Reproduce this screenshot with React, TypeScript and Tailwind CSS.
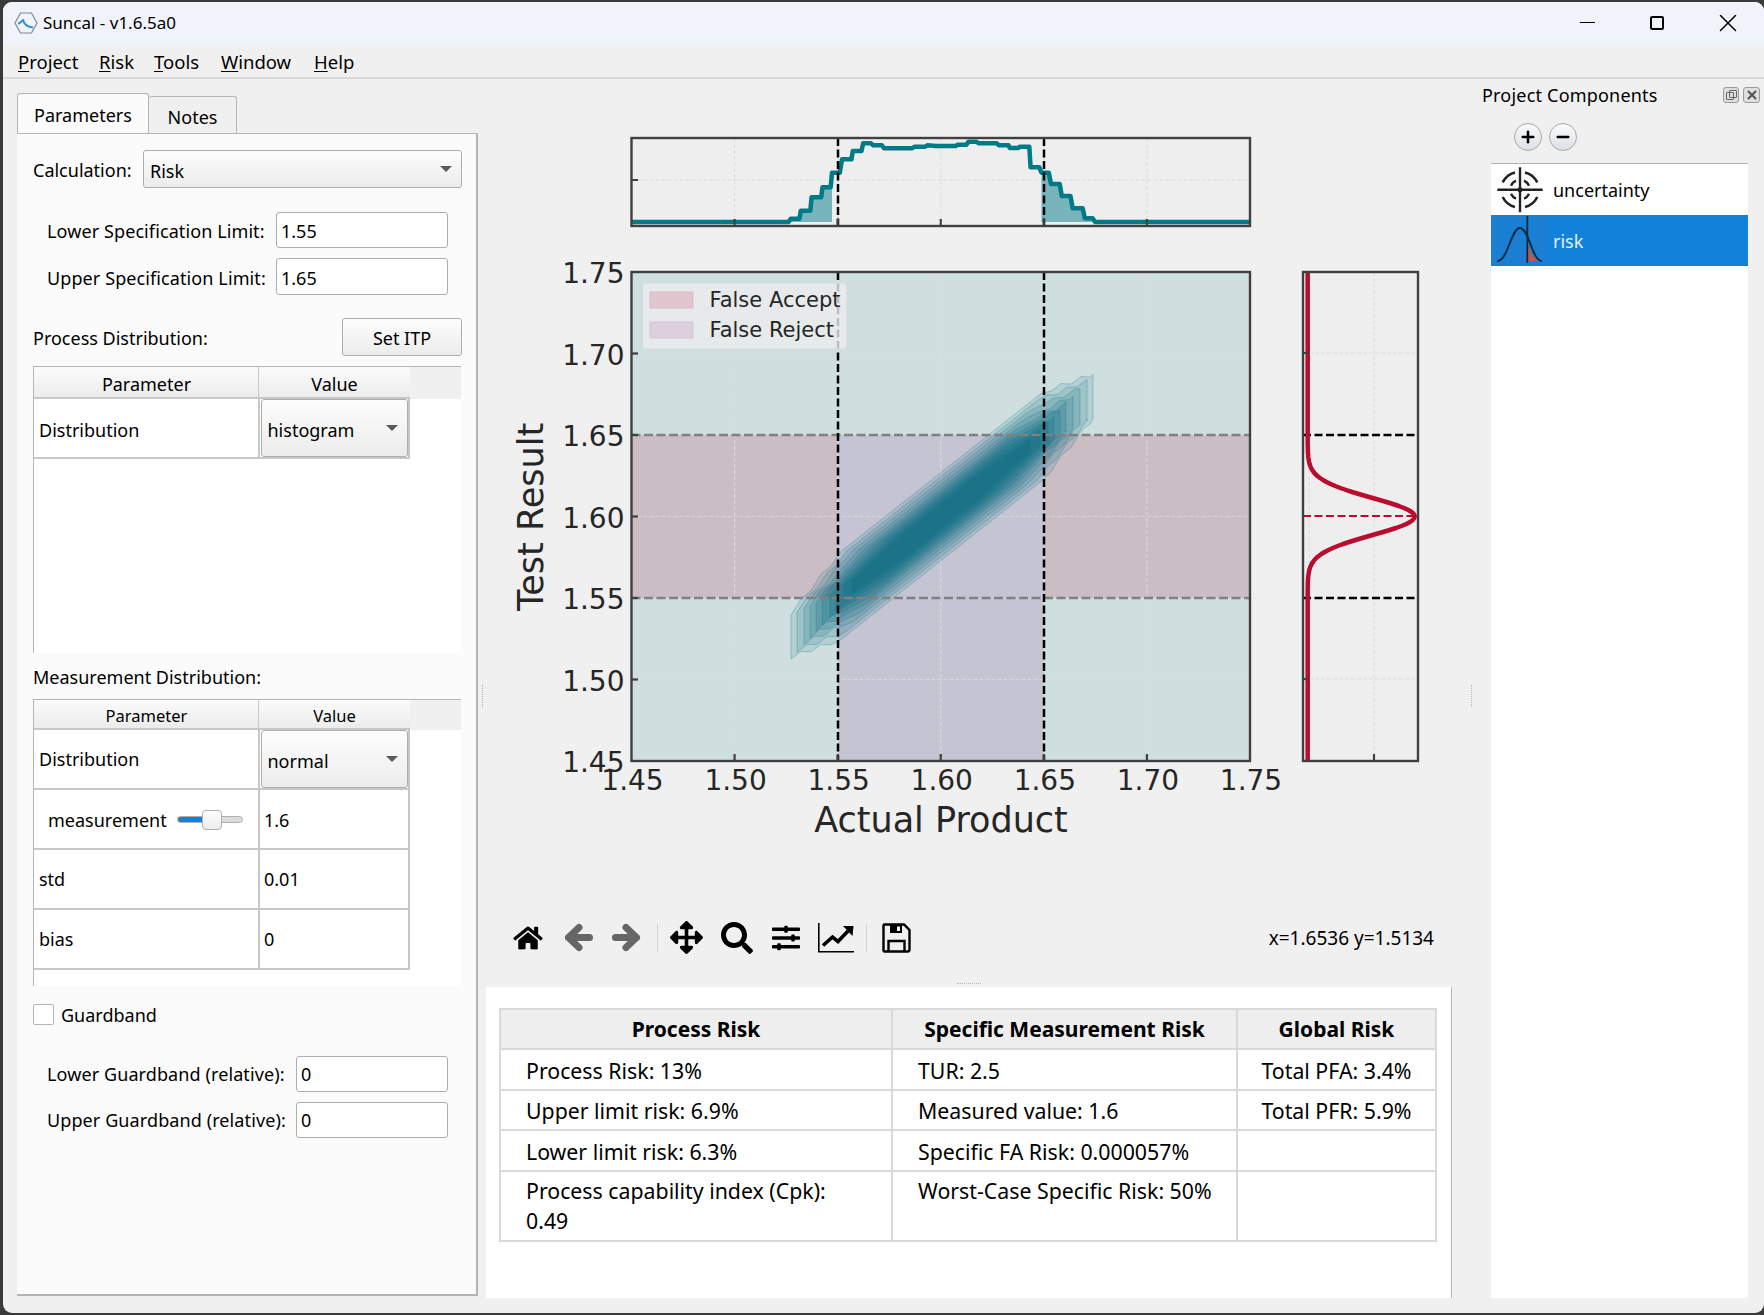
import type { ReactNode } from "react";
import { FaArrowsAlt, FaHome, FaSearch, FaSlidersH } from "react-icons/fa";
import { Minus, Plus, X } from "lucide-react";

const UI_FONT = "font-['Noto_Sans','Open_Sans',sans-serif]";
const PLOT_FONT = "'DejaVu Sans', sans-serif";

// plot pixel positions of data values
const xPos = (v: number) => 631.5 + ((v - 1.45) / 0.3) * 618.5;
const yPos = (v: number) => 272 + ((1.75 - v) / 0.3) * 489;
const TICKS = [1.5, 1.55, 1.6, 1.65, 1.7];
const ALL_TICKS = ["1.45", "1.50", "1.55", "1.60", "1.65", "1.70", "1.75"];

// histogram outline read from the top plot
const HIST: [number, number][] = [
  [73, 306], [435, 306], [440, 296], [460, 296], [463, 272], [485, 272], [488, 232], [510, 232],
  [513, 202], [532, 202], [535, 158], [553, 158], [558, 118], [580, 118], [583, 93], [603, 93],
  [607, 70], [625, 70], [630, 76], [650, 76], [655, 85], [720, 85], [725, 80], [750, 80],
  [755, 76], [775, 78], [820, 78], [825, 74], [845, 74], [850, 65], [868, 65], [873, 70],
  [915, 70], [920, 76], [942, 76], [945, 84], [965, 84], [968, 80], [990, 80], [993, 142],
  [1013, 142], [1018, 158], [1035, 158], [1040, 192], [1060, 192], [1065, 228], [1085, 228],
  [1090, 265], [1113, 265], [1118, 295], [1136, 295], [1142, 306], [1500, 306],
];
const histPts = HIST.map(([x, y]) => `${(600 + x / 2.306).toFixed(1)},${(120 + y / 3).toFixed(1)}`).join(" ");
const histFill = (a: number, b: number) => {
  const inside = HIST.filter(([x]) => x >= a && x <= b);
  const pts = inside.map(([x, y]) => [600 + x / 2.306, 120 + y / 3]);
  const first = pts[0];
  const last = pts[pts.length - 1];
  return `M${first[0]},222 ` + pts.map((p) => `L${p[0]},${p[1]}`).join(" ") + ` L${last[0]},222 Z`;
};

// [half height, left end, right end, fill alpha] of each contour level
const LEVELS: [number, number, number, number][] = [
  [44, 791, 1093, 0.13],
  [40, 797, 1087, 0.13],
  [36, 804, 1080, 0.14],
  [32, 810, 1073, 0.16],
  [28, 816, 1066, 0.18],
  [25, 822, 1060, 0.2],
  [22, 830, 1054, 0.22],
  [19, 836, 1048, 0.25],
  [16, 844, 1040, 0.28],
  [13, 852, 1030, 0.3],
];

function contour(h: number, x0: number, x1: number) {
  const line = (x: number) => 516.5 - (x - 941) * 0.79;
  const half = (x: number) => {
    const t = Math.min(1, (x - x0) / 50, (x1 - x) / 50);
    return h * (0.5 + 0.5 * t);
  };
  // the tails outside the spec limits are visibly stepped
  const jag = (x: number, i: number) => (x < 838 || x > 1044 ? (i % 2 === 0 ? 2 : -2) : 0);
  const upper: string[] = [];
  const lower: string[] = [];
  let i = 0;
  for (let x = x0; x <= x1; x += 10) {
    upper.push(`${x},${(line(x) - half(x) + jag(x, i)).toFixed(1)}`);
    lower.unshift(`${x},${(line(x) + half(x) + jag(x, i)).toFixed(1)}`);
    i++;
  }
  upper.push(`${x1},${(line(x1) - half(x1)).toFixed(1)}`);
  lower.unshift(`${x1},${(line(x1) + half(x1)).toFixed(1)}`);
  return [...upper, ...lower].join(" ");
}

const gaussPts = (() => {
  const pts: string[] = [];
  for (let y = 272; y <= 761; y += 2) {
    const v = Math.exp(-((y - 516.5) ** 2) / (2 * 18.5 * 18.5));
    pts.push(`${(1307.7 + v * 107).toFixed(1)},${y}`);
  }
  return pts.join(" ");
})();

function Plots() {
  const grid = { stroke: "#dedede", strokeWidth: 1.2, strokeDasharray: "4 2" };
  const frame = { fill: "none", stroke: "#404040", strokeWidth: 2.4 };
  const tick = { stroke: "#404040", strokeWidth: 2.2 };
  return (
    <svg width={966} height={826} viewBox="486 79 966 826" className="block" fontFamily={PLOT_FONT}>
      {/* top marginal */}
      <rect x={631.5} y={138} width={618.5} height={88} fill="#eeeeee" />
      {TICKS.map((t) => (
        <line key={t} x1={xPos(t)} x2={xPos(t)} y1={138} y2={226} {...grid} />
      ))}
      <line x1={631.5} x2={1250} y1={180} y2={180} {...grid} />
      <path d={histFill(435, 535)} fill="#007a87" fillOpacity={0.5} />
      <path d={histFill(1018, 1142)} fill="#007a87" fillOpacity={0.5} />
      <polyline points={histPts} fill="none" stroke="#007a87" strokeWidth={4.5} strokeLinejoin="round" />
      <line x1={838} x2={838} y1={138} y2={226} stroke="#000" strokeWidth={2.5} strokeDasharray="8 3.5" />
      <line x1={1044} x2={1044} y1={138} y2={226} stroke="#000" strokeWidth={2.5} strokeDasharray="8 3.5" />
      {TICKS.map((t) => (
        <line key={t} x1={xPos(t)} x2={xPos(t)} y1={226} y2={219} {...tick} />
      ))}
      <line x1={631.5} x2={638} y1={180} y2={180} {...tick} />
      <rect x={631.5} y={138} width={618.5} height={88} {...frame} />

      {/* main plot */}
      <rect x={631.5} y={272} width={618.5} height={489} fill="#cfdfdf" />
      <rect x={631.5} y={435} width={618.5} height={163} fill="#cbbdc4" />
      <rect x={838} y={435} width={206} height={326} fill="#c4c4d2" />
      {TICKS.map((t) => (
        <g key={t}>
          <line x1={xPos(t)} x2={xPos(t)} y1={272} y2={761} {...grid} strokeOpacity={0.75} />
          <line x1={631.5} x2={1250} y1={yPos(t)} y2={yPos(t)} {...grid} strokeOpacity={0.75} />
        </g>
      ))}
      {LEVELS.map(([h, a, b, alpha]) => (
        <polygon key={h} points={contour(h, a, b)} fill="#0b6a80" fillOpacity={alpha} stroke="#0b7a8a" strokeOpacity={0.3} strokeWidth={1} />
      ))}
      <line x1={631.5} x2={1250} y1={435} y2={435} stroke="#808080" strokeWidth={2.5} strokeDasharray="9 3.5" />
      <line x1={631.5} x2={1250} y1={598} y2={598} stroke="#808080" strokeWidth={2.5} strokeDasharray="9 3.5" />
      <line x1={838} x2={838} y1={272} y2={761} stroke="#000" strokeWidth={2.5} strokeDasharray="8 3.5" />
      <line x1={1044} x2={1044} y1={272} y2={761} stroke="#000" strokeWidth={2.5} strokeDasharray="8 3.5" />
      {TICKS.map((t) => (
        <g key={t}>
          <line x1={xPos(t)} x2={xPos(t)} y1={761} y2={754} {...tick} />
          <line x1={631.5} x2={638} y1={yPos(t)} y2={yPos(t)} {...tick} />
        </g>
      ))}
      <rect x={631.5} y={272} width={618.5} height={489} {...frame} />

      {/* legend */}
      <rect x={642.5} y={283} width={204.5} height={66} rx={3} fill="#ececec" fillOpacity={0.8} stroke="#d4d8d8" />
      <rect x={650} y={292} width={43} height={16} fill="#e0c7cf" stroke="#d8bcc6" />
      <rect x={650} y={322} width={43} height={16} fill="#dccfde" stroke="#d2c4d6" />
      <text x={709.5} y={306.5} fontSize={21} fill="#262626">False Accept</text>
      <text x={709.5} y={336.5} fontSize={21} fill="#262626">False Reject</text>

      {/* axis labels */}
      {ALL_TICKS.map((t) => (
        <text key={t} x={xPos(Number(t)) + 1} y={790} fontSize={28} fill="#262626" textAnchor="middle">{t}</text>
      ))}
      {ALL_TICKS.map((t) => (
        <text key={t} x={624.5} y={yPos(Number(t)) + 11} fontSize={28} fill="#262626" textAnchor="end">{t}</text>
      ))}
      <text x={941} y={832} fontSize={35} fill="#262626" textAnchor="middle">Actual Product</text>
      <text x={0} y={0} fontSize={35} fill="#262626" textAnchor="middle" transform="translate(543 517) rotate(-90)">Test Result</text>

      {/* right marginal */}
      <rect x={1303} y={272} width={115} height={489} fill="#eeeeee" />
      <line x1={1374} x2={1374} y1={272} y2={761} {...grid} />
      <line x1={1309} x2={1309} y1={272} y2={761} {...grid} />
      <line x1={1303} x2={1418} y1={353} y2={353} {...grid} />
      <line x1={1303} x2={1418} y1={679} y2={679} {...grid} />
      <line x1={1303} x2={1418} y1={435} y2={435} stroke="#000" strokeWidth={2.5} strokeDasharray="8 3.5" />
      <line x1={1303} x2={1418} y1={598} y2={598} stroke="#000" strokeWidth={2.5} strokeDasharray="8 3.5" />
      <polyline points={gaussPts} fill="none" stroke="#ba0c2f" strokeWidth={4.5} strokeLinejoin="round" />
      <line x1={1303} x2={1418} y1={516} y2={516} stroke="#ba0c2f" strokeWidth={2} strokeDasharray="8 3.5" />
      <line x1={1374} x2={1374} y1={761} y2={754} {...tick} />
      <line x1={1303} x2={1309} y1={353} y2={353} {...tick} />
      <line x1={1303} x2={1309} y1={679} y2={679} {...tick} />
      <rect x={1303} y={272} width={115} height={489} {...frame} />
    </svg>
  );
}

function Caret() {
  return <span className="block w-0 h-0 border-l-[6px] border-r-[6px] border-t-[6px] border-l-transparent border-r-transparent border-t-[#5a5a5a]" />;
}

function Select({ value, className }: { value: string; className: string }) {
  return (
    <div className={`flex items-center justify-between rounded-[3px] border border-[#adadad] bg-gradient-to-b from-[#fdfdfd] to-[#ececec] pl-[6px] pr-[9px] ${className}`}>
      <span className="pt-[4px]">{value}</span>
      <Caret />
    </div>
  );
}

function Field({ label, value, labelW, inputW, mt, h, textPt = "pt-[2px]" }: { label: string; value: string; labelW: string; inputW: string; mt: string; h: string; textPt?: string }) {
  return (
    <div className={`flex items-center pl-[14px] ${mt} ${h}`}>
      <span className={`${labelW} whitespace-nowrap tracking-[0.1px] ${textPt}`}>{label}</span>
      <div className={`${inputW} h-full flex items-center rounded-[3px] border border-[#adadad] bg-white pl-[4px] ${textPt}`}>{value}</div>
    </div>
  );
}

function Row({ left, right, leftClass = "pl-[5px]" }: { left: ReactNode; right: ReactNode; leftClass?: string }) {
  return (
    <div className="flex h-[60px] w-[376px] border-b-2 border-[#c8c8c8]">
      <div className={`w-[224px] flex items-center ${leftClass}`}>{left}</div>
      <div className="w-[152px] flex items-center border-l-2 border-r-2 border-[#c8c8c8]">{right}</div>
    </div>
  );
}

function ParamTable({ small, children }: { small?: boolean; children: ReactNode }) {
  return (
    <div className="h-[287px] w-[428px] bg-white border-l border-t border-[#b4b4b4]">
      <div className={`flex ${small ? "h-[30px] text-[16.5px]" : "h-[32px]"}`}>
        <div className="w-[224px] pt-[4px] pl-[1px] flex items-center justify-center border-b-2 border-[#c8c8c8] bg-gradient-to-b from-[#fbfbfb] to-[#ececec]">Parameter</div>
        <div className="w-[152px] pt-[4px] flex items-center justify-center border-l border-b-2 border-[#c8c8c8] bg-gradient-to-b from-[#fbfbfb] to-[#ececec]">Value</div>
        <div className="flex-1 bg-[#f0f0f0]" />
      </div>
      {children}
    </div>
  );
}

function LeftPanel() {
  return (
    <div className="w-[461px] flex flex-col shrink-0 pt-[14px]">
      <div className="flex items-end h-[40px]">
        <div className="w-[132px] h-[40px] pt-[4px] flex items-center justify-center bg-[#fbfbfb] border border-b-0 border-[#b4b4b4] rounded-t-[3px]">Parameters</div>
        <div className="w-[88px] h-[37px] pt-[4px] flex items-center justify-center bg-[#f0f0f0] border border-l-0 border-b-0 border-[#b4b4b4] rounded-t-[3px]">Notes</div>
      </div>
      <div className="h-[1163px] bg-[#fbfbfb] border-t border-r-2 border-b-2 border-[#b4b4b4] pl-[16px] pt-[16px]">
        <div className="flex items-center h-[38px]">
          <span className="w-[110px] pt-[3px]">Calculation:</span>
          <Select value="Risk" className="w-[319px] h-full" />
        </div>
        <Field label="Lower Specification Limit:" value="1.55" labelW="w-[229px]" inputW="w-[172px]" mt="mt-[24px]" h="h-[36px]" textPt="pt-[3px]" />
        <Field label="Upper Specification Limit:" value="1.65" labelW="w-[229px]" inputW="w-[172px]" mt="mt-[10px]" h="h-[37px]" textPt="pt-[3px]" />
        <div className="flex items-center justify-between w-[429px] h-[38px] mt-[23px]">
          <span className="pt-[2px]">Process Distribution:</span>
          <div className="w-[120px] h-full pt-[2px] flex items-center justify-center rounded-[3px] border border-[#adadad] bg-gradient-to-b from-[#fdfdfd] to-[#ececec]">Set ITP</div>
        </div>
        <div className="mt-[10px]">
          <ParamTable>
            <Row left={<span className="pt-[4px]">Distribution</span>} right={<Select value="histogram" className="w-[147px] h-[58px] mx-auto" />} />
          </ParamTable>
        </div>
        <div className="h-[46px] pt-[3px] flex items-center">Measurement Distribution:</div>
        <ParamTable small>
          <Row left="Distribution" right={<Select value="normal" className="w-[147px] h-[58px] mx-auto" />} />
          <Row
            leftClass="pl-[14px]"
            left={
              <div className="flex items-center">
                <span className="w-[129px] pt-[2px]">measurement</span>
                <div className="relative w-[66px] h-[7px] rounded-full border border-[#b0b0b0] bg-[#dcdcdc]">
                  <div className="w-[26px] h-full rounded-l-full bg-[#1281d9]" />
                  <div className="absolute left-[24px] top-[-7px] w-[20px] h-[20px] rounded-[4px] border border-[#b0b0b0] bg-gradient-to-b from-[#ffffff] to-[#ececec]" />
                </div>
              </div>
            }
            right={<span className="pl-[4px] pt-[2px]">1.6</span>}
          />
          <Row left="std" leftClass="pl-[5px]" right={<span className="pl-[4px]">0.01</span>} />
          <Row left="bias" leftClass="pl-[5px]" right={<span className="pl-[4px]">0</span>} />
        </ParamTable>
        <div className="flex items-center mt-[18px] h-[21px]">
          <div className="w-[21px] h-[21px] border border-[#b4b4b4] bg-white rounded-[2px]" />
          <span className="ml-[7px] pt-[2px]">Guardband</span>
        </div>
        <Field label="Lower Guardband (relative):" value="0" labelW="w-[249px]" inputW="w-[152px]" mt="mt-[31px]" h="h-[36px]" textPt="pt-[1px]" />
        <Field label="Upper Guardband (relative):" value="0" labelW="w-[249px]" inputW="w-[152px]" mt="mt-[10px]" h="h-[36px]" textPt="pt-[1px]" />
      </div>
    </div>
  );
}

function BackIcon({ flip }: { flip?: boolean }) {
  return (
    <svg width={29} height={29} viewBox="0 0 29 29" fill="none" stroke="#666666" strokeWidth={7} strokeLinecap="round" strokeLinejoin="round" className={`shrink-0 ${flip ? "-scale-x-100" : ""}`}>
      <path d="M15 4.500L4.500 14.500L15 24.500M4.500 14.500H25.500" />
    </svg>
  );
}

function PlotIcon() {
  return (
    <svg width={36} height={30} viewBox="0 0 36 30" fill="none" stroke="#000" className="shrink-0">
      <path d="M0.800 0V28.800H36" strokeWidth={1.600} />
      <path d="M5 22.500L14.500 14L20 18.500L30 8" strokeWidth={3.600} />
      <path d="M25 3L35.500 3L34.500 13Z" fill="#000" stroke="none" />
    </svg>
  );
}

function SaveIcon() {
  return (
    <svg width={29} height={30} viewBox="0 0 29 30" fill="none" className="shrink-0">
      <path d="M2.500 1.500H22L27.500 7V26.500A2 2 0 0 1 25.500 28.500H2.500A1.500 1.500 0 0 1 1.500 26.500V2.500A1 1 0 0 1 2.500 1.500Z" stroke="#000" strokeWidth={2.400} />
      <path d="M8 1.500H20V10H8Z" fill="#000" />
      <path d="M15 3.500H18V8H15Z" fill="#f0f0f0" />
      <path d="M6.500 28V18H22.500V28" stroke="#000" strokeWidth={2.400} />
    </svg>
  );
}

function Toolbar() {
  return (
    <div className="h-[75px] flex items-center pl-[27px] pr-[18px] pb-[10px]">
      <FaHome className="w-[30px] h-[26px] shrink-0 text-black" />
      <div className="ml-[21px]"><BackIcon /></div>
      <div className="ml-[19px]"><BackIcon flip /></div>
      <div className="ml-[16px] w-px h-[28px] bg-[#d4d4d4]" />
      <FaArrowsAlt className="ml-[12px] w-[33px] h-[33px] text-black" />
      <FaSearch className="ml-[18px] w-[32px] h-[32px] text-black" />
      <FaSlidersH className="ml-[18px] w-[30px] h-[28px] text-black" />
      <div className="ml-[17px]"><PlotIcon /></div>
      <div className="ml-[12px] w-px h-[28px] bg-[#d4d4d4]" />
      <div className="ml-[15px]"><SaveIcon /></div>
      <span className="ml-auto text-[19px] pt-[2px]">x=1.6536 y=1.5134</span>
    </div>
  );
}

const RISK_ROWS = [
  { h: "h-[41px]", cells: ["Process Risk: 13%", "TUR: 2.5", "Total PFA: 3.4%"] },
  { h: "h-[40px]", cells: ["Upper limit risk: 6.9%", "Measured value: 1.6", "Total PFR: 5.9%"] },
  { h: "h-[41px]", cells: ["Lower limit risk: 6.3%", "Specific FA Risk: 0.000057%", ""] },
];

function ResultsTable() {
  const th = "border-2 border-[#d9d9d9] bg-[#eeeeee] font-bold text-center align-middle text-[21px] pt-[2px]";
  const td = "border-2 border-[#d9d9d9] pl-[25px] pr-[20px] align-middle leading-[30px] pt-[2px]";
  return (
    <div className="h-[311px] bg-white border-r border-[#b4b4b4] pl-[13px] pt-[21px]">
      <table className="w-[936px] table-fixed border-collapse text-[21.3px]">
        <colgroup>
          <col className="w-[392px]" />
          <col className="w-[345px]" />
          <col className="w-[199px]" />
        </colgroup>
        <thead>
          <tr className="h-[40px]">
            <th className={th}>Process Risk</th>
            <th className={th}>Specific Measurement Risk</th>
            <th className={th}>Global Risk</th>
          </tr>
        </thead>
        <tbody>
          {RISK_ROWS.map((r) => (
            <tr key={r.cells[0]} className={r.h}>
              <td className={td}>{r.cells[0]}</td>
              <td className={td}>{r.cells[1]}</td>
              <td className={`${td} whitespace-nowrap text-center !px-0`}>{r.cells[2]}</td>
            </tr>
          ))}
          <tr className="h-[70px]">
            <td className={`${td} !align-top !pt-[4px]`}>Process capability index (Cpk):<br />0.49</td>
            <td className={`${td} !align-top !pt-[4px] whitespace-nowrap`}>Worst-Case Specific Risk: 50%</td>
            <td className={td} />
          </tr>
        </tbody>
      </table>
    </div>
  );
}

function TargetIcon() {
  return (
    <svg width={57} height={51} viewBox="0 0 57 51" fill="none" stroke="#222" className="shrink-0">
      <path d="M29 3.300V48.300M6.300 25.700H51.700" strokeWidth={2.400} />
      <path d="M11.700 18.400A18.700 18.700 0 0 1 24 8.400M34 8.400A18.700 18.700 0 0 1 46.300 18.400M46.300 33A18.700 18.700 0 0 1 34 43M24 43A18.700 18.700 0 0 1 11.700 33" strokeWidth={2.600} />
      <path d="M20 21.700A10 10 0 0 1 25 16.700M33 16.700A10 10 0 0 1 38 21.700M38 29.700A10 10 0 0 1 33 34.700M25 34.700A10 10 0 0 1 20 29.700" strokeWidth={2.400} />
      <circle cx={29} cy={25.700} r={2.500} fill="#222" stroke="none" />
    </svg>
  );
}

function RiskIcon() {
  return (
    <svg width={57} height={51} viewBox="0 0 57 51" fill="none" className="shrink-0 bg-[#1a7fd2]">
      <path d="M36.300 24C38.500 36 42 46 51 46L36.300 46Z" fill="#b85c44" />
      <path d="M6.300 46C17 46 20 13 29 13C38 13 41 46 51 46" stroke="#10283c" strokeWidth={1.800} />
      <path d="M36.300 1V48" stroke="#10283c" strokeWidth={1.800} />
    </svg>
  );
}

function RoundButton({ children }: { children: ReactNode }) {
  return (
    <div className="w-[28px] h-[28px] rounded-full border border-[#a8a8a8] bg-gradient-to-b from-[#fbfbfb] to-[#dcdfe4] flex items-center justify-center">
      {children}
    </div>
  );
}

function RightPanel() {
  return (
    <div className="flex-1 flex flex-col">
      <div className="h-[32px] flex items-center relative">
        <span className="ml-[-9px] tracking-[0.2px]">Project Components</span>
        <div className="ml-auto mr-[4px] flex gap-[4px]">
          <div className="relative w-[16px] h-[16px] rounded-[3px] border border-[#9a9a9a] bg-[#dedede]">
            <div className="absolute left-[2px] top-[4px] w-[8px] h-[8px] border border-[#666] rounded-[1px]" />
            <div className="absolute left-[5px] top-[2px] w-[8px] h-[8px] border border-[#666] rounded-[1px]" />
          </div>
          <div className="w-[17px] h-[16px] rounded-[3px] border border-[#9a9a9a] bg-[#dedede] flex items-center justify-center">
            <X className="w-[14px] h-[14px] text-[#555]" strokeWidth={3.500} />
          </div>
        </div>
      </div>
      <div className="h-[52px] flex items-center gap-[7px] pl-[23px]">
        <RoundButton><Plus className="w-[18px] h-[18px] text-black" strokeWidth={3.400} /></RoundButton>
        <RoundButton><Minus className="w-[18px] h-[18px] text-black" strokeWidth={3.400} /></RoundButton>
      </div>
      <div className="w-[257px] h-[1135px] bg-white border-t border-[#b4b4b4]">
        <div className="h-[51px] flex items-center">
          <TargetIcon />
          <span className="ml-[5px] pt-[2px]">uncertainty</span>
        </div>
        <div className="h-[51px] flex items-center bg-[#1281d9] text-[#e8f2fb]">
          <RiskIcon />
          <span className="ml-[5px] pt-[2px]">risk</span>
        </div>
      </div>
    </div>
  );
}

function Logo() {
  return (
    <svg width={24} height={22} viewBox="0 0 24 22" fill="none" className="shrink-0">
      <path d="M6.500 1H17.500L23 11L17.500 21H6.500L1 11Z" stroke="#7c8a96" strokeWidth={1.200} />
      <path d="M4.300 12L10 7.500" stroke="#2a8fd6" strokeWidth={2.200} />
      <path d="M9 8C10 13 14 15 19 15.500" stroke="#2a8fd6" strokeWidth={1.800} />
    </svg>
  );
}

function Dots({ vertical }: { vertical?: boolean }) {
  return <div className={`border-dotted border-[#b8b8b8] ${vertical ? "h-[22px] border-l" : "w-[24px] border-t"}`} />;
}

function MenuItem({ first, rest, w }: { first: string; rest: string; w: string }) {
  return (
    <span className={w}>
      <span className="underline decoration-1 underline-offset-2">{first}</span>
      {rest}
    </span>
  );
}

export default function App() {
  return (
    <div className="w-[1764px] h-[1315px] overflow-hidden bg-[#3a3a3a] pt-[2px] pl-[3px]">
      <div className={`w-[1761px] h-[1311px] rounded-[9px] overflow-hidden flex flex-col bg-[#f0f0f0] text-[18px] text-black ${UI_FONT}`}>
        {/* Title bar */}
        <div className="h-[43px] flex items-center bg-[#f0f3f9] pl-[11px] pb-[2px] shrink-0">
          <Logo />
          <span className="ml-[5px] text-[17px]">Suncal - v1.6.5a0</span>
          <div className="ml-auto flex items-center">
            <div className="w-[15px] h-px bg-black mr-[55px]" />
            <div className="w-[14px] h-[14px] border-2 border-black rounded-[2px] mr-[49px]" />
            <X className="w-[30px] h-[30px] mr-[21px] text-black" strokeWidth={1.200} />
          </div>
        </div>

        {/* Menu */}
        <div className="h-[34px] flex items-center pl-[15px] pt-[2px] border-b-2 border-[#d9d9d9] shrink-0 text-[18.5px]">
          <MenuItem first="P" rest="roject" w="w-[81px]" />
          <MenuItem first="R" rest="isk" w="w-[55px]" />
          <MenuItem first="T" rest="ools" w="w-[67px]" />
          <MenuItem first="W" rest="indow" w="w-[93px]" />
          <MenuItem first="H" rest="elp" w="w-auto" />
        </div>

        <div className="flex flex-1 pl-[14px]">
          <LeftPanel />
          <div className="w-[8px] flex items-center justify-center shrink-0"><Dots vertical /></div>

          {/* Plots and results */}
          <div className="w-[966px] shrink-0 flex flex-col">
            <Plots />
            <Toolbar />
            <div className="h-[7px] flex items-center justify-center"><Dots /></div>
            <ResultsTable />
          </div>

          <div className="w-[39px] flex items-center justify-center shrink-0"><Dots vertical /></div>
          <RightPanel />
        </div>
      </div>
    </div>
  );
}
